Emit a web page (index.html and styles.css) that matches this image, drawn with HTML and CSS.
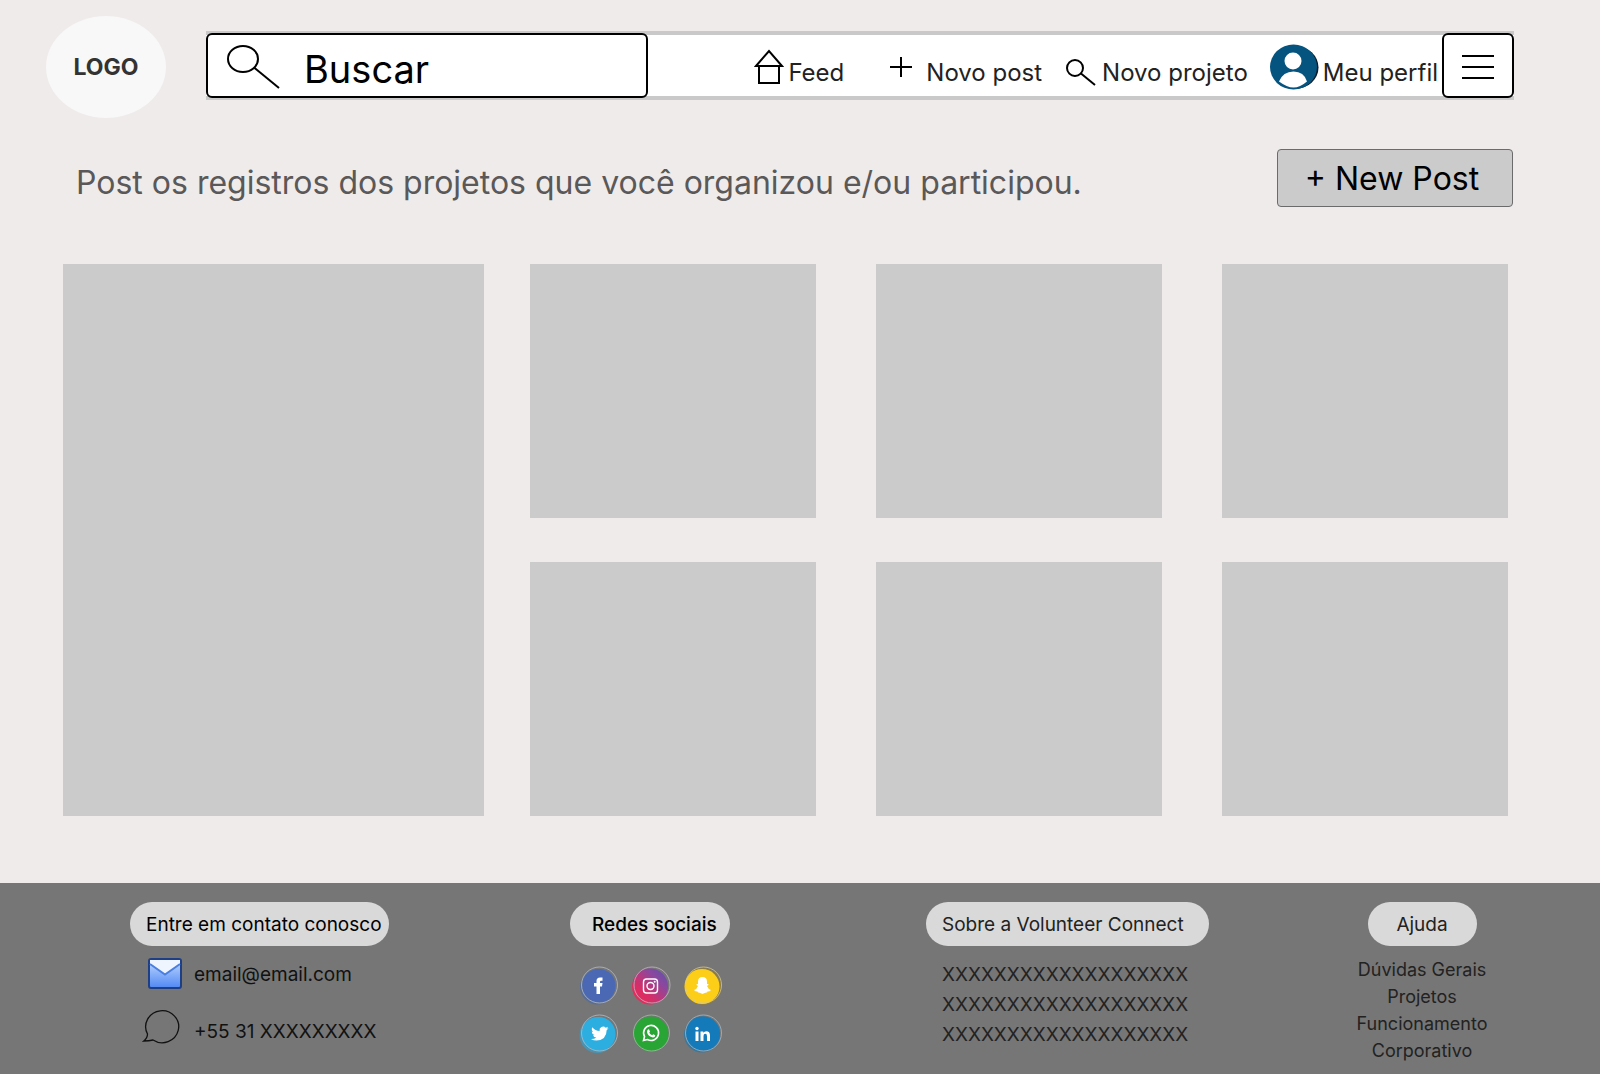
FILE: index.html
```html
<!DOCTYPE html>
<html lang="pt-BR">
<head>
<meta charset="utf-8">
<meta name="viewport" content="width=device-width, initial-scale=1">
<title>Volunteer Connect</title>
<link rel="stylesheet" href="styles.css">
</head>
<body>
<header class="header">
  <a class="logo" href="#">LOGO</a>
  <div class="bar">
    <label class="search">
      <svg class="search-icon" width="54" height="44" viewBox="0 0 54 44" fill="none" stroke="#000" stroke-width="2" aria-hidden="true"><ellipse cx="17" cy="14" rx="15" ry="13"/><path d="M28 22.500L53 43"/></svg>
      <input class="search-input" type="search" placeholder="Buscar" aria-label="Buscar">
    </label>
    <nav class="nav">
      <a class="nav-item nav-feed" href="#">
        <svg width="30" height="36" viewBox="0 0 30 36" fill="none" stroke="#000" stroke-width="2" aria-hidden="true"><path d="M2 17L15 2L28 17Z"/><path d="M5 17V34H25V17"/></svg>
        <span>Feed</span>
      </a>
      <a class="nav-item nav-post" href="#">
        <svg width="22" height="20" viewBox="0 0 22 20" stroke="#000" stroke-width="2" aria-hidden="true"><path d="M0 10H22M11 0V20"/></svg>
        <span>Novo post</span>
      </a>
      <a class="nav-item nav-project" href="#">
        <svg width="30" height="38" viewBox="0 0 30 38" fill="none" stroke="#000" stroke-width="2" aria-hidden="true"><circle cx="9" cy="20" r="8"/><path d="M15 25.500L29 37"/></svg>
        <span>Novo projeto</span>
      </a>
      <a class="nav-item nav-profile" href="#">
        <svg width="49" height="46" viewBox="0 0 49 46" aria-hidden="true"><ellipse cx="25" cy="23.500" rx="23.500" ry="21.500" fill="#0b1a24"/><ellipse cx="23.500" cy="23" rx="23.500" ry="22.500" fill="#04547f"/><circle cx="23" cy="17" r="8.500" fill="#fff"/><path d="M9 37.500Q13 27.500 23.500 27.500T37 37.500Q30 43.500 23.500 43.500T9 37.500Z" fill="#fff"/></svg>
        <span>Meu perfil</span>
      </a>
      <button class="menu" type="button" aria-label="Menu">
        <svg width="32" height="26" viewBox="0 0 32 26" stroke="#000" stroke-width="2" aria-hidden="true"><path d="M0 3H32M0 14H32M0 25H32"/></svg>
      </button>
    </nav>
  </div>
</header>

<main class="main">
  <div class="intro">
    <p class="intro-text">Post os registros dos projetos que você organizou e/ou participou.</p>
    <button class="new-post" type="button">+ New Post</button>
  </div>
  <section class="gallery" aria-label="Posts">
    <article class="card card-featured"></article>
    <div class="card-grid">
      <article class="card"></article>
      <article class="card"></article>
      <article class="card"></article>
      <article class="card"></article>
      <article class="card"></article>
      <article class="card"></article>
    </div>
  </section>
</main>

<footer class="footer">
  <section>
    <h2 class="pill pill-contact">Entre em contato conosco</h2>
    <ul class="contacts">
      <li class="contact">
        <svg width="40" height="34" viewBox="0 0 40 34" aria-hidden="true">
          <defs><linearGradient id="mail" x1="0" y1="0" x2="0" y2="1"><stop offset="0" stop-color="#c4dcff"/><stop offset="1" stop-color="#5088f4"/></linearGradient></defs>
          <rect x="7" y="2" width="32" height="29" rx="2" fill="url(#mail)" stroke="#1f3f85" stroke-width="2"/><path d="M8 3H38V7L23 17L8 7Z" fill="#eef5ff"/><path d="M8 7L23 17.500L38 7" fill="none" stroke="#4a7fe0" stroke-width="2"/>
        </svg>
        <a href="mailto:email@email.com">email@email.com</a>
      </li>
      <li class="contact">
        <svg width="40" height="42" viewBox="0 0 40 42" fill="none" stroke="#111" stroke-width="1.300" aria-hidden="true"><path d="M5.500 24A16.500 16 0 1 1 11 30Q7 31 1.800 31Q5.500 28 5.500 24Z"/></svg>
        <span>+55 31 XXXXXXXXX</span>
      </li>
    </ul>
  </section>
  <section>
    <h2 class="pill pill-social">Redes sociais</h2>
    <div class="socials">
      <a href="#" aria-label="Facebook"><svg width="40" height="40" viewBox="0 0 40 40"><circle cx="18.500" cy="21" r="17.500" fill="#4267b2" opacity=".55"/><circle cx="20" cy="19.500" r="16.500" fill="#4a68b4"/><circle cx="20.500" cy="19" r="18" fill="none" stroke="#b3bac8" stroke-width=".8"/><path d="M17.500 28V20.500H15V17H17.500V15Q17.500 11.500 21 11.500H23.500V14.800H22Q21 14.800 21 16V17H23.500L23 20.500H21V28Z" fill="#fff"/></svg></a>
      <a href="#" aria-label="Instagram"><svg width="40" height="40" viewBox="0 0 40 40"><defs><linearGradient id="insta" x1="0" y1="1" x2="1" y2="0"><stop offset="0" stop-color="#f42a50"/><stop offset=".35" stop-color="#d52e68"/><stop offset=".7" stop-color="#8c479e"/><stop offset="1" stop-color="#5754ad"/></linearGradient></defs><circle cx="19" cy="20.500" r="18" fill="url(#insta)"/><circle cx="21" cy="19" r="18" fill="none" stroke="#c6b5c5" stroke-width=".8"/><g fill="none" stroke="#fff" stroke-width="1.400"><rect x="12.500" y="13" width="14" height="14" rx="3"/><circle cx="19.500" cy="20" r="3.500"/></g><circle cx="23.700" cy="15.800" r="1" fill="#fff"/></svg></a>
      <a href="#" aria-label="Snapchat"><svg width="40" height="40" viewBox="0 0 40 40"><circle cx="20" cy="20.500" r="18.500" fill="#8c7d48"/><circle cx="19" cy="20.500" r="17.500" fill="#fdce17"/><circle cx="20.500" cy="19" r="18" fill="none" stroke="#d8c88b" stroke-width=".8"/><path d="M19.500 11Q24 11 24 15.500V18L25.500 18Q25.500 19.500 24 20Q25 23 28 24Q27 25.500 24.500 25.500L24 26.500Q22 26.300 19.500 28Q17 26.300 15 26.500L14.500 25.500Q12 25.500 11 24Q14 23 15 20Q13.500 19.500 13.500 18L15 18V15.500Q15 11 19.500 11Z" fill="#fff"/></svg></a>
      <a href="#" aria-label="Twitter"><svg width="40" height="40" viewBox="0 0 40 40"><circle cx="18.500" cy="21" r="18" fill="#29abe2" opacity=".55"/><circle cx="19.500" cy="20" r="17" fill="#2daee1"/><circle cx="20.500" cy="19" r="18" fill="none" stroke="#adbdc5" stroke-width=".8"/><path transform="translate(12 12)" d="M17.500 2.200Q16.600 2.600 15.500 2.700Q16.700 2 17 .8Q16 1.400 14.700 1.700A3.600 3.600 0 0 0 8.600 4.900Q4.200 4.700 1.200 1.200Q0 4.200 2.300 6Q1.400 6 .7 5.600Q.8 8.300 3.500 9.100Q2.800 9.300 2 9.200Q2.700 11.500 5.300 11.600Q3 13.300 0 13.100Q2.500 14.600 5.500 14.600Q15.500 14.200 15.700 4.100Q16.800 3.300 17.500 2.200Z" fill="#fff"/></svg></a>
      <a href="#" aria-label="WhatsApp"><svg width="40" height="40" viewBox="0 0 40 40"><circle cx="20" cy="20" r="17.500" fill="#29a536"/><circle cx="20.500" cy="19" r="18" fill="none" stroke="#a4bda6" stroke-width=".8"/><path d="M12.500 26.500L13.500 22.500A7.500 7.500 0 1 1 16.500 25.500Z" fill="none" stroke="#fff" stroke-width="1.600"/><path d="M17 15.500L18 15.300L19 17.700L18.200 18.700Q19.200 20.500 21.200 21.300L22.200 20.300L24.300 21.300Q24.200 23.500 22 23.500Q17 22.500 16 18.200Q15.800 16.500 17 15.500Z" fill="#fff"/></svg></a>
      <a href="#" aria-label="LinkedIn"><svg width="40" height="40" viewBox="0 0 40 40"><circle cx="19" cy="20.500" r="18" fill="#1478b8" opacity=".6"/><circle cx="20" cy="19.500" r="17" fill="#157ab9"/><circle cx="20.500" cy="19" r="18" fill="none" stroke="#a5b6c2" stroke-width=".8"/><circle cx="14" cy="14.500" r="1.700" fill="#fff"/><path d="M12.500 17.500H15.500V27H12.500ZM17.500 17.500H20.300V18.800Q21.300 17.200 23.300 17.200Q27 17.200 27 21.500V27H24V22.200Q24 19.800 22.300 19.800Q20.500 19.800 20.500 22V27H17.500Z" fill="#fff"/></svg></a>
    </div>
  </section>
  <section>
    <h2 class="pill pill-about">Sobre a Volunteer Connect</h2>
    <p class="about">XXXXXXXXXXXXXXXXXXX<br>XXXXXXXXXXXXXXXXXXX<br>XXXXXXXXXXXXXXXXXXX</p>
  </section>
  <section class="help">
    <h2 class="pill pill-help">Ajuda</h2>
    <ul class="help-list">
      <li><a href="#">Dúvidas Gerais</a></li>
      <li><a href="#">Projetos</a></li>
      <li><a href="#">Funcionamento</a></li>
      <li><a href="#">Corporativo</a></li>
    </ul>
  </section>
</footer>
</body>
</html>
```
FILE: styles.css
```css
* { box-sizing: border-box; }

body {
  margin: 0;
  min-height: 100vh;
  display: flex;
  flex-direction: column;
  background: #efebea;
  color: #000;
  font-family: Inter, "Liberation Sans", sans-serif;
}

a { color: inherit; text-decoration: none; }
ul { margin: 0; padding: 0; list-style: none; }
svg { display: block; flex: none; }
button, input { font: inherit; color: inherit; }

.header {
  display: flex;
  align-items: center;
  gap: 40px;
  padding: 16px 86px 0 46px;
}

.logo {
  flex: none;
  display: grid;
  place-items: center;
  width: 120px;
  height: 102px;
  border-radius: 50%;
  background: #f8f8f8;
  color: #333;
  font-size: 23px;
  font-weight: 700;
}

.bar {
  flex: 1;
  display: flex;
  height: 69px;
  margin-bottom: 3px;
  border: solid #c9c9c9;
  border-width: 4px 0;
  background: #fff;
}

.search {
  flex: 0 1 442px;
  min-width: 0;
  display: flex;
  align-items: center;
  gap: 24px;
  margin: -2px 0;
  padding: 2px 18px 0;
  border: 2px solid #000;
  border-radius: 6px;
  background: #fff;
}

.search-input {
  flex: 1;
  min-width: 0;
  padding: 4px 0 0;
  border: 0;
  outline: 0;
  background: none;
  font-size: 38px;
  line-height: 48px;
}

.search-input::placeholder { color: #000; opacity: 1; }

.nav {
  display: flex;
  align-items: stretch;
  margin-left: auto;
}

.nav-item {
  display: flex;
  align-items: center;
  gap: 6px;
  margin-right: 24px;
  padding-top: 2px;
  color: #222;
  font-size: 24px;
  line-height: 28px;
  white-space: nowrap;
}

.nav-item span { padding-top: 12px; }
.nav-feed { gap: 4px; margin-right: 46px; }
.nav-post { gap: 14px; }
.nav-project { margin-right: 22px; }
.nav-profile { margin-right: 4px; gap: 4px; }

.menu {
  display: grid;
  place-items: center;
  width: 72px;
  margin: -2px 0;
  padding: 0;
  border: 2px solid #000;
  border-radius: 6px;
  background: #fff;
}

.main {
  flex: 1;
  padding: 31px 87px 66px 63px;
}

.intro {
  display: flex;
  align-items: center;
  justify-content: space-between;
  padding-left: 13px;
}

.intro-text {
  margin: 0;
  padding-top: 10px;
  color: #5a5858;
  font-size: 32px;
  line-height: 40px;
}

.new-post {
  flex: none;
  width: 236px;
  height: 58px;
  padding: 0 12px 0 6px;
  border: 1px solid #6b6b6b;
  border-radius: 4px;
  background: #cbcbcb;
  font-size: 32px;
}

.gallery {
  display: flex;
  gap: 46px;
  margin-top: 57px;
  padding-right: 5px;
}

.card { background: #cbcbcb; }
.card-featured { flex: 421; }

.card-grid {
  flex: 978;
  display: grid;
  grid-template-columns: repeat(3, 1fr);
  grid-auto-rows: 254px;
  gap: 44px 60px;
}

.footer {
  display: grid;
  grid-template-columns: 440fr 356fr 432fr 128px;
  padding: 19px 114px 0 130px;
  background: #767676;
  min-height: 191px;
}

.pill {
  display: flex;
  align-items: center;
  height: 44px;
  margin: 0;
  border-radius: 22px;
  background: #d9d9d9;
  font-size: 19px;
  font-weight: 400;
  white-space: nowrap;
}

.pill-contact { width: 259px; padding-left: 16px; }
.pill-social { width: 160px; padding-left: 22px; font-weight: 500; }
.pill-about { width: 283px; padding-left: 16px; color: #222; }
.pill-help { width: 109px; justify-content: center; color: #222; }

.contacts {
  display: grid;
  gap: 16px;
  padding: 8px 0 0 12px;
  font-size: 19px;
  color: #111;
}

.contact {
  display: flex;
  align-items: center;
  gap: 12px;
  min-height: 40px;
}

.socials {
  display: grid;
  grid-template-columns: repeat(3, 40px);
  gap: 8px 12px;
  padding: 20px 0 0 9px;
}

.about {
  margin: 0;
  padding: 14px 0 0 16px;
  color: #222;
  font-size: 19px;
  line-height: 30px;
}

.help {
  display: flex;
  flex-direction: column;
  align-items: center;
}

.help-list {
  padding-top: 10px;
  color: #222;
  font-size: 18px;
  line-height: 27px;
  text-align: center;
  white-space: nowrap;
}
```
